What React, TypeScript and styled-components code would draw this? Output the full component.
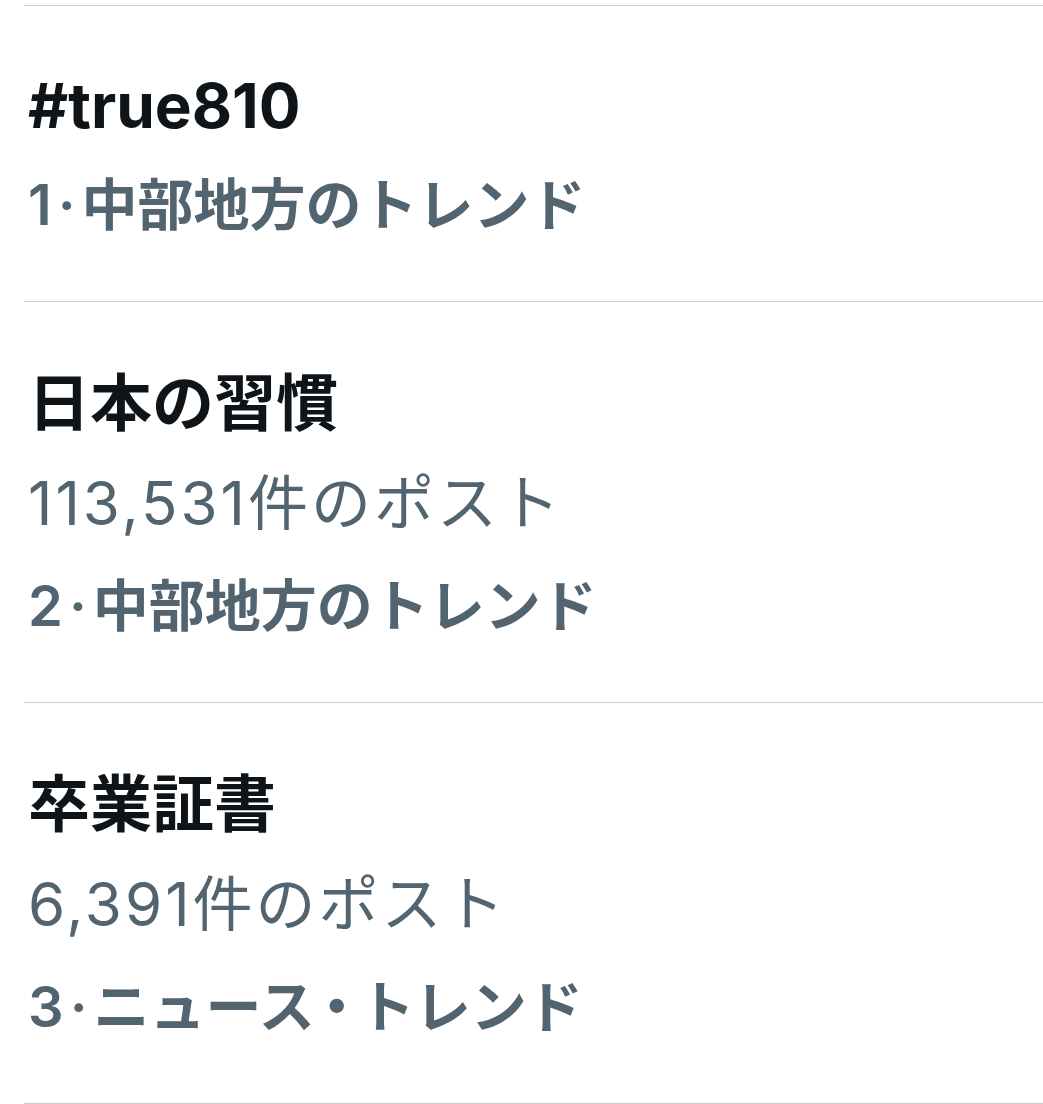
import React from "react";
import styled, { createGlobalStyle } from "styled-components";

const GlobalStyle = createGlobalStyle`
  html, body {
    margin: 0;
    padding: 0;
    background: #ffffff;
  }
  body {
    font-family: Inter, "Noto Sans CJK JP", sans-serif;
    -webkit-font-smoothing: antialiased;
  }
`;

const Page = styled.div`
  padding-top: 5px;
  width: 1043px;
`;

const TrendList = styled.ul`
  list-style: none;
  margin: 0 0 0 24px;
  padding: 0;
  border-top: 1px solid #cccccc;
`;

const TrendItem = styled.li`
  display: flex;
  flex-direction: column;
  padding: 54px 0 44px 4px;
  border-bottom: 1px solid #cccccc;

  &:first-child {
    padding-top: 52px;
  }
`;

const Title = styled.div`
  font-family: Inter, "Noto Sans CJK JP", sans-serif;
  font-size: 62px;
  font-weight: 700;
  line-height: 96px;
  color: #0f1419;
  white-space: nowrap;
`;

const Meta = styled.div<{ $strong?: boolean }>`
  font-family: Inter, "Noto Sans CJK JP", sans-serif;
  font-size: ${(p) => (p.$strong ? "56px" : "60px")};
  font-weight: ${(p) => (p.$strong ? 600 : 400)};
  letter-spacing: ${(p) => (p.$strong ? "0" : "3px")};
  line-height: 103px;
  color: #536471;
  white-space: nowrap;
`;

const Rank = styled.span`
  font-family: Inter, sans-serif;
`;

const Dot = styled.span`
  display: inline-block;
  margin: 0 6px 0 6px;
  font-family: Inter, sans-serif;
`;

const Interpunct = styled.span`
  display: inline-block;
  margin: 0 8px;
  font-feature-settings: "halt" 1;
`;

type Trend = {
  title: string;
  count?: string;
  rank: number;
  context: string[];
};

const trends: Trend[] = [
  { title: "#true810", rank: 1, context: ["中部地方のトレンド"] },
  { title: "日本の習慣", count: "113,531件のポスト", rank: 2, context: ["中部地方のトレンド"] },
  { title: "卒業証書", count: "6,391件のポスト", rank: 3, context: ["ニュース", "トレンド"] },
];

export default function App() {
  return (
    <>
      <GlobalStyle />
      <Page>
        <TrendList>
          {trends.map((t) => (
            <TrendItem key={t.title}>
              <Title>{t.title}</Title>
              {t.count && <Meta>{t.count}</Meta>}
              <Meta $strong>
                <Rank>{t.rank}</Rank>
                <Dot>·</Dot>
                {t.context.map((part, i) => (
                  <React.Fragment key={part}>
                    {i > 0 && <Interpunct>・</Interpunct>}
                    {part}
                  </React.Fragment>
                ))}
              </Meta>
            </TrendItem>
          ))}
        </TrendList>
      </Page>
    </>
  );
}
